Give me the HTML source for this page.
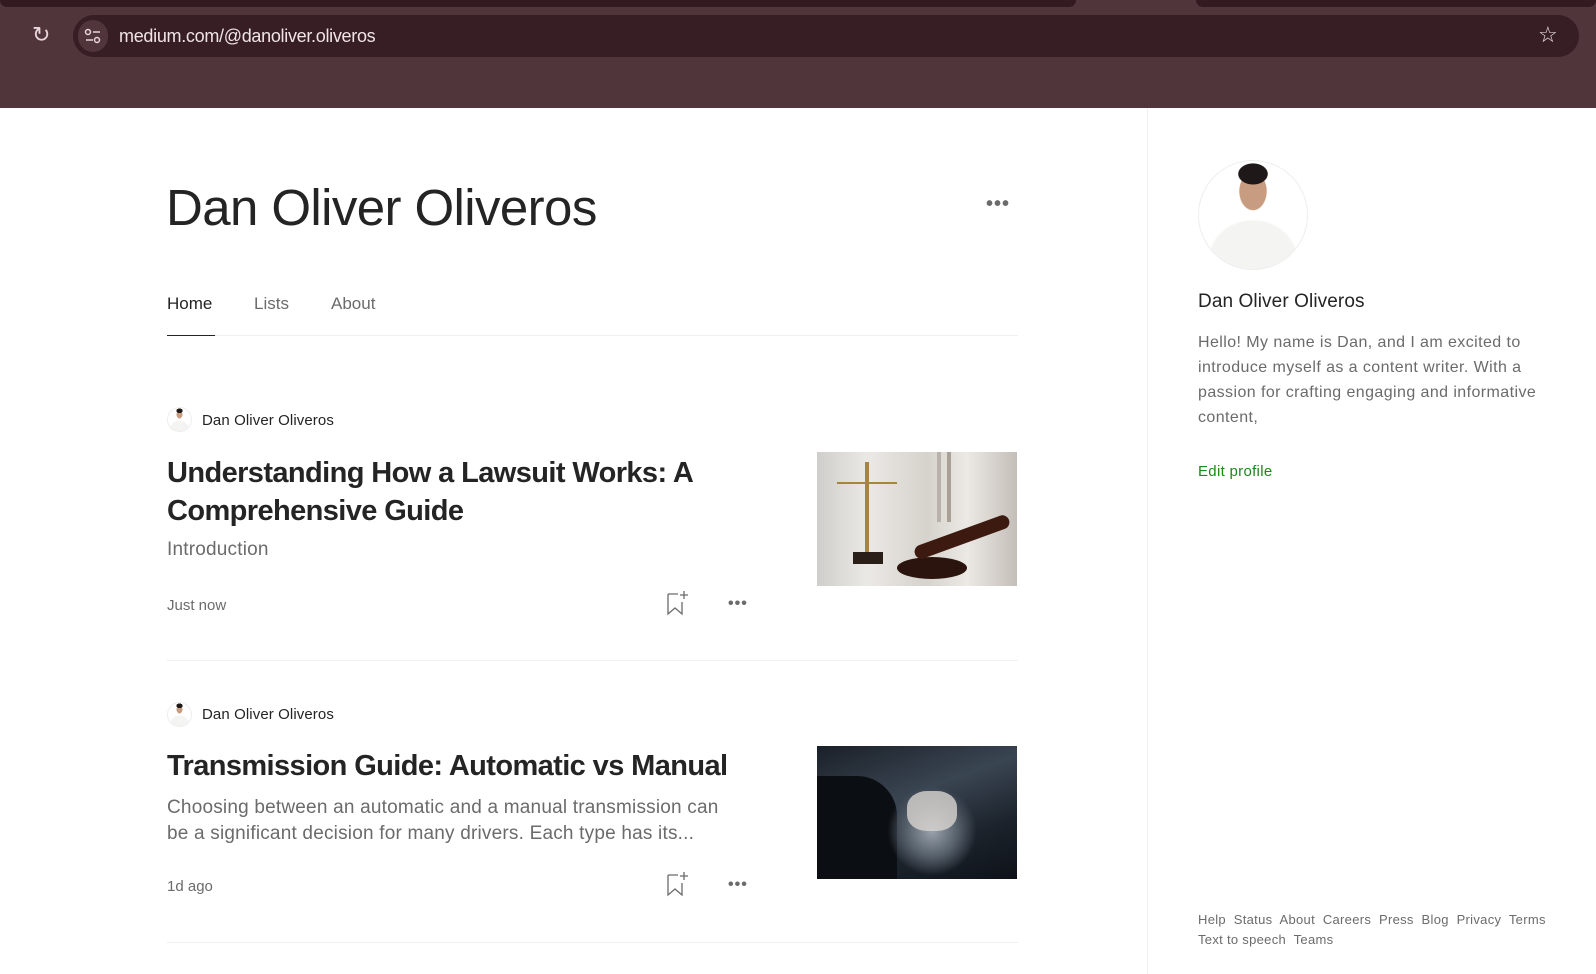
<!DOCTYPE html>
<html><head><meta charset="utf-8"><style>
*{margin:0;padding:0;box-sizing:border-box}
body{width:1596px;height:974px;overflow:hidden;background:#fff;font-family:"Liberation Sans",sans-serif;position:relative;color:#242424}
.a{position:absolute;white-space:nowrap}
.chrome{position:absolute;left:0;top:0;width:1596px;height:108px;background:#50353b}
.tab{position:absolute;top:0;height:7px;background:#321a20;border-radius:0 0 8px 8px}
.url{position:absolute;left:73px;top:15px;width:1506px;height:42px;background:#361e24;border-radius:21px}
.av{border-radius:50%;background:radial-gradient(ellipse 14% 10% at 50% 12%,#1e1818 0 95%,transparent 100%),radial-gradient(ellipse 13% 18% at 50% 28%,#c89c80 0 95%,transparent 100%),radial-gradient(ellipse 42% 38% at 50% 92%,#f4f4f2 0 95%,transparent 100%),#fff;border:1px solid #eee}
.t{font-weight:bold;font-size:29px;letter-spacing:-0.6px;color:#242424}
.g{color:#6b6b6b}
.sep{position:absolute;left:167px;width:851px;height:1px;background:#f0f0f0}
.dots{font-size:20px;letter-spacing:1px;color:#6b6b6b;font-weight:bold}
</style></head><body>
<div class="chrome">
<div class="tab" style="left:0;width:1076px"></div>
<div class="tab" style="left:1196px;width:400px"></div>
<div class="a" style="left:32px;top:22px;font-size:22px;color:#e8d6da">&#x21bb;</div>
<div class="url"></div>
<div class="a" style="left:78px;top:20px;width:30px;height:32px;border-radius:16px;background:#50353b"></div>
<svg class="a" style="left:84px;top:28px" width="18" height="16"><circle cx="4" cy="4" r="2.5" fill="none" stroke="#e8d6da" stroke-width="1.5"/><line x1="9" y1="4" x2="16" y2="4" stroke="#e8d6da" stroke-width="1.5"/><circle cx="13" cy="12" r="2.5" fill="none" stroke="#e8d6da" stroke-width="1.5"/><line x1="2" y1="12" x2="9" y2="12" stroke="#e8d6da" stroke-width="1.5"/></svg>
<div class="a" style="left:119px;top:26px;font-size:18px;color:#f0e4e6;letter-spacing:-0.3px">medium.com/@danoliver.oliveros</div>
<div class="a" style="left:1538px;top:22px;font-size:22px;color:#f0e4e6">&#x2606;</div>
</div>
<div class="a" style="left:1147px;top:108px;width:1px;height:866px;background:#f0f0f0"></div>

<div class="a" style="left:166px;top:178px;font-size:51px;letter-spacing:-0.6px;color:#242424">Dan Oliver Oliveros</div>
<div class="a dots" style="left:986px;top:193px">•••</div>
<div class="a" style="left:167px;top:294px;font-size:17px;color:#242424">Home</div>
<div class="a g" style="left:254px;top:294px;font-size:17px">Lists</div>
<div class="a g" style="left:331px;top:294px;font-size:17px">About</div>
<div class="a" style="left:167px;top:335px;width:851px;height:1px;background:#f0f0f0"></div>
<div class="a" style="left:167px;top:335px;width:48px;height:1px;background:#242424"></div>

<div class="a av" style="left:167px;top:407px;width:25px;height:25px"></div>
<div class="a" style="left:202px;top:412px;font-size:15px;letter-spacing:0.1px">Dan Oliver Oliveros</div>
<div class="a t" style="left:167px;top:454px;line-height:38px">Understanding How a Lawsuit Works: A<br>Comprehensive Guide</div>
<div class="a g" style="left:167px;top:539px;font-size:19px;letter-spacing:0.2px">Introduction</div>
<div class="a g" style="left:167px;top:597px;font-size:15px">Just now</div>
<svg class="a" style="left:666px;top:590px" width="24" height="26"><path d="M2 4h10M2 4v20l7-6 7 6V12M18 1v8M14 5h8" fill="none" stroke="#6b6b6b" stroke-width="1.3"/></svg>
<div class="a dots" style="left:728px;top:595px;font-size:16px">•••</div>
<div class="a" style="left:817px;top:452px;width:200px;height:134px;overflow:hidden;background:linear-gradient(90deg,#d0cecb 0,#ebe9e6 25%,#d6d2cc 55%,#ece9e5 75%,#c4beb8 100%)">
<div style="position:absolute;left:0;top:0;width:200px;height:70px;background:repeating-linear-gradient(90deg,transparent 0 120px,#b9b2aa 120px 124px,#e0dcd6 124px 130px,#a9a198 130px 134px,transparent 134px 140px)"></div>
<div style="position:absolute;left:20px;top:30px;width:60px;height:60px;border-top:2px solid #a8843e"></div>
<div style="position:absolute;left:48px;top:10px;width:4px;height:100px;background:#a8843e"></div>
<div style="position:absolute;left:36px;top:100px;width:30px;height:12px;background:#2a1f18"></div>
<div style="position:absolute;left:80px;top:105px;width:70px;height:22px;border-radius:50%;background:#2c140e"></div>
<div style="position:absolute;left:95px;top:78px;width:100px;height:14px;border-radius:7px;background:#3d1a10;transform:rotate(-20deg)"></div>
</div>
<div class="sep" style="top:660px"></div>

<div class="a av" style="left:167px;top:702px;width:25px;height:25px"></div>
<div class="a" style="left:202px;top:706px;font-size:15px;letter-spacing:0.1px">Dan Oliver Oliveros</div>
<div class="a t" style="left:167px;top:747px;line-height:38px">Transmission Guide: Automatic vs Manual</div>
<div class="a g" style="left:167px;top:795px;font-size:19px;line-height:26px;letter-spacing:0.2px">Choosing between an automatic and a manual transmission can<br>be a significant decision for many drivers. Each type has its...</div>
<div class="a g" style="left:167px;top:878px;font-size:15px">1d ago</div>
<svg class="a" style="left:666px;top:871px" width="24" height="26"><path d="M2 4h10M2 4v20l7-6 7 6V12M18 1v8M14 5h8" fill="none" stroke="#6b6b6b" stroke-width="1.3"/></svg>
<div class="a dots" style="left:728px;top:876px;font-size:16px">•••</div>
<div class="a" style="left:817px;top:746px;width:200px;height:133px;overflow:hidden;background:linear-gradient(160deg,#1a2028 0,#3a4552 40%,#1c232c 70%,#0e1218 100%)">
<div style="position:absolute;left:0;top:30px;width:80px;height:110px;background:#0b0e12;border-radius:0 40px 0 0"></div>
<div style="position:absolute;left:70px;top:40px;width:90px;height:90px;background:radial-gradient(ellipse at 50% 50%,#9aa3ac 0,#56606b 40%,transparent 70%)"></div>
<div style="position:absolute;left:90px;top:45px;width:50px;height:40px;border-radius:40%;background:#d8d4d0;opacity:.8"></div>
</div>
<div class="sep" style="top:942px"></div>

<div class="a av" style="left:1198px;top:160px;width:110px;height:110px"></div>
<div class="a" style="left:1198px;top:291px;font-size:19px;letter-spacing:0.1px">Dan Oliver Oliveros</div>
<div class="a g" style="left:1198px;top:330px;font-size:16px;line-height:25px;letter-spacing:0.42px">Hello! My name is Dan, and I am excited to<br>introduce myself as a content writer. With a<br>passion for crafting engaging and informative<br>content,</div>
<div class="a" style="left:1198px;top:463px;font-size:15px;color:#1a8917;letter-spacing:0.3px">Edit profile</div>
<div class="a g" style="left:1198px;top:910px;font-size:13px;line-height:20px;letter-spacing:0.3px">Help&nbsp; Status&nbsp; About&nbsp; Careers&nbsp; Press&nbsp; Blog&nbsp; Privacy&nbsp; Terms<br>Text to speech&nbsp; Teams</div>
</body></html>
